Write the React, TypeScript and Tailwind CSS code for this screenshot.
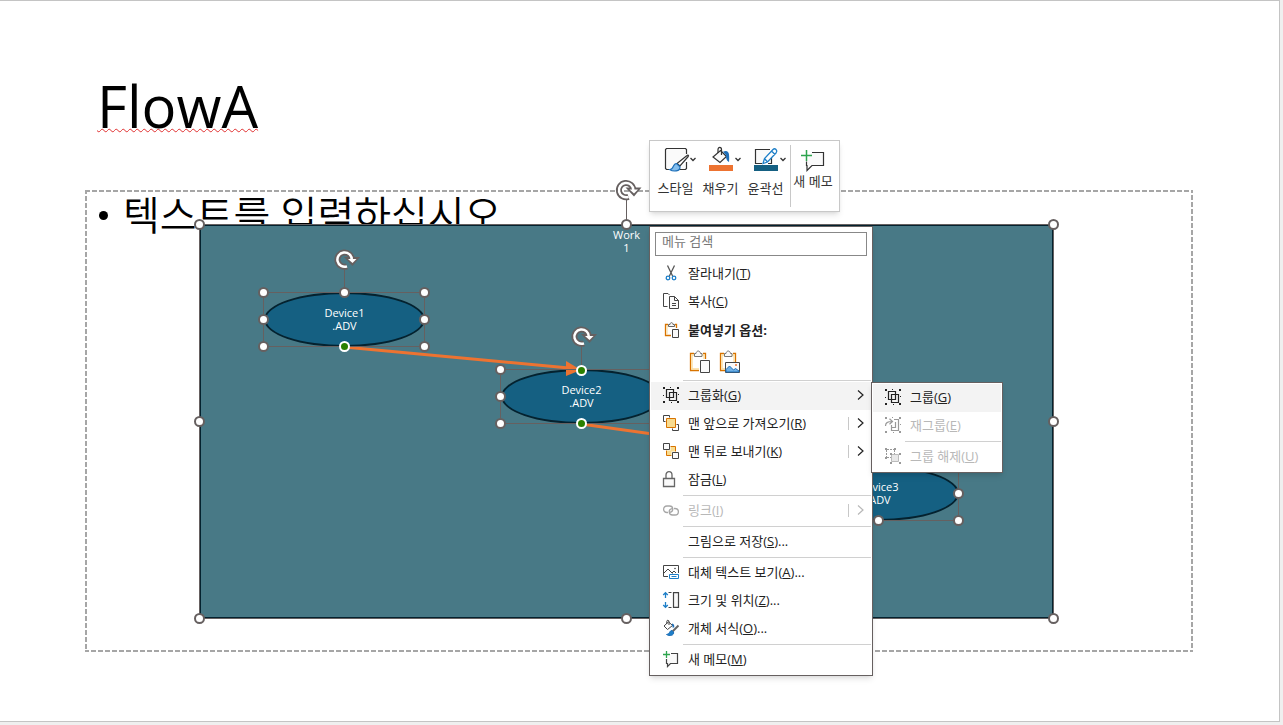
import React from 'react';

interface Point {
  x: number;
  y: number;
}

interface Device {
  name: string;
  x: number;
  y: number;
  linkedTop?: boolean;
  linkedBottom?: boolean;
}

const NODE_W = 161;
const NODE_H = 54;

// positions are relative to the top left corner of the Work shape
const devices: Device[] = [
  { name: 'Device1', x: 65, y: 68, linkedBottom: true },
  { name: 'Device2', x: 302, y: 145, linkedTop: true, linkedBottom: true },
  { name: 'Device3', x: 599, y: 242, linkedTop: true },
];

/* ===================== MENU ICONS ===================== */

const MenuIcon: React.FC<{ children?: React.ReactNode }> = ({ children }) => (
  <svg viewBox="0 0 16 16" className="h-4 w-4 shrink-0 overflow-visible" fill="none" stroke="#444" strokeWidth="1" aria-hidden="true">
    {children}
  </svg>
);

const CutIcon = () => (
  <MenuIcon>
    <path d="M4.5 .5 9.6 11M11.5 .5 6.4 11" stroke="#555" strokeWidth="1.3" />
    <circle cx="5" cy="13" r="1.8" stroke="#1e7fc8" strokeWidth="1.3" />
    <circle cx="11" cy="13" r="1.8" stroke="#1e7fc8" strokeWidth="1.3" />
  </MenuIcon>
);

const CopyIcon = () => (
  <MenuIcon>
    <path d="M4.5 13.5H.5V.5H5l1.5 1.5" />
    <path d="M6.5 3.5h5l4 4v8h-9z" fill="#fafafa" />
    <path d="M11.5 3.5v4h4M9 10.5h4M9 12.5h4" />
  </MenuIcon>
);

const PasteIcon = () => (
  <MenuIcon>
    <path d="M8 13.5H2.5v-11H5M12 2.5h1.5V6" stroke="#d87300" strokeWidth="1.3" />
    <path d="M4 12.500V4h8.500" stroke="#fbdc9a" />
    <path d="M5.500 4.500v-2H7C7 0 10 0 10 2.500h1.500v2z" stroke="#666" fill="#fafafa" />
    <path d="M9.500 7.500h6v8h-6z" fill="#fafafa" />
  </MenuIcon>
);

const Corners = () => (
  <path
    d="M0 0h2v2H0zM14 0h2v2h-2zM0 14h2v2H0zM14 14h2v2h-2zM7 0h1v1H7zM0 8h1v1H0zM15 7h1v1h-1zM8 15h1v1H8z"
    stroke="none"
    fill="currentColor"
  />
);

const GroupIcon = () => (
  <MenuIcon>
    <Corners />
    <path d="M3.500 2.500h7v8h-7zM6.500 5.500h7v8h-7z" stroke="currentColor" strokeWidth="1.2" />
  </MenuIcon>
);

const RegroupIcon = () => (
  <MenuIcon>
    <g color="#999">
      <Corners />
      <path d="M9 2.500h4.500v11h-7v-3M10.500 5v5.500H6.500V8" stroke="currentColor" strokeWidth="1.2" />
      <path d="M.5 9C.5 5.500 2.500 4.500 7 4.500M4.500 1.800 7.500 4.500 4.500 7.200" stroke="currentColor" strokeWidth="1.2" />
    </g>
  </MenuIcon>
);

const UngroupIcon = () => (
  <MenuIcon>
    <g color="#999">
      <path d="M2 1.500h7M1.500 2v7M9.500 2v4M2 9.500h4" stroke="currentColor" strokeDasharray="2 1" />
      <path d="M6.500 6.500h7v7h-7z" fill="#e8e8e8" stroke="#bbb" />
      <path
        d="M0 0h2v2H0zM9 0h2v2H9zM0 9h2v2H0zM5 5h2v2H5zM14 5h2v2h-2zM5 14h2v2H5zM14 14h2v2h-2z"
        stroke="none"
        fill="currentColor"
      />
    </g>
  </MenuIcon>
);

const FrontIcon = () => (
  <MenuIcon>
    <path d="M2.500 6.500h-2v-6h6v2M9.500 15.500h6v-6h-2M9.500 13.500v2" />
    <path d="M3.500 3.500h9v9h-9z" stroke="#d87300" fill="#f8db8f" />
  </MenuIcon>
);

const BackIcon = () => (
  <MenuIcon>
    <path d="M3.500 3.500h9v9h-9z" stroke="#d87300" fill="#f8db8f" />
    <path d="M-.5-.5h8v8h-8zM8.500 8.500h8v8h-8z" fill="#fff" stroke="none" />
    <path d="M.5.5h6v6h-6zM9.500 9.500h6v6h-6z" fill="#fafafa" />
  </MenuIcon>
);

const LockIcon = () => (
  <MenuIcon>
    <path d="M.5 7.500h11v8H.5z" fill="#fafafa" stroke="#666" strokeWidth="1.3" />
    <path d="M3 7.500V4c0-4.500 6-4.500 6 0v3.500" stroke="#666" strokeWidth="1.3" />
  </MenuIcon>
);

const LinkIcon = () => (
  <MenuIcon>
    <g stroke="#a6a6a6" strokeWidth="1.3">
      <path d="M5 10.500H4C-.5 10.500-.5 4 4 4h2.500c4 0 4.500 5.500.5 6.300" />
      <path d="M11 6.500h1c4.500 0 4.500 6.500 0 6.500H9.500c-4 0-4.500-5.500-.5-6.300" />
    </g>
  </MenuIcon>
);

const AltTextIcon = () => (
  <MenuIcon>
    <path d="M5 12.500H.5v-11h15V9" />
    <path d="m1 9 4-4 4.500 4.500M9 9l2-2 2 2" />
    <circle cx="12" cy="4.500" r=".8" fill="#444" stroke="none" />
    <path d="M6.500 10.500h9v4h-9z" fill="#fff" stroke="#1e7fc8" />
    <path d="M8.500 12.500h5" stroke="#1e7fc8" />
  </MenuIcon>
);

const SizeIcon = () => (
  <MenuIcon>
    <path d="M2.500 1v5M2.500 10v5M.2 3 2.500.7 4.800 3M.2 13l2.300 2.300L4.800 13" stroke="#1e7fc8" strokeWidth="1.300" />
    <path d="M5.500.5h3M5.500 15.500h3" />
    <path d="M10.500.7h5v14.600h-5z" strokeWidth="1.200" fill="#fafafa" />
  </MenuIcon>
);

const FormatIcon = () => (
  <MenuIcon>
    <path d="M5.500 1.800 9.500 5.500 4.500 9.500 1 6zM3.800 4V1.500c0-1.800 2.200-1.500 2.200 0V5" />
    <path d="M9 4.500c1.500 0 1.500 1.500 1.300 3" stroke="#1e6fb8" strokeWidth="1.800" />
    <path d="m15.500 5.500-6 6" stroke="#666" strokeWidth="2" />
    <path d="M9 10.500c-3 0-2 4-5.500 4 3 2 8 1 7-2.500z" fill="#1e7fc8" stroke="#1e6fb8" />
  </MenuIcon>
);

const MemoIcon = () => (
  <MenuIcon>
    <path d="M3.500 8v4.500h1v3l3-3h7v-10H8" fill="#fafafa" strokeWidth="1.200" />
    <path d="M3.500 0v7M0 3.500h7" stroke="#2da44e" strokeWidth="1.300" />
  </MenuIcon>
);

/* ===================== TOOLBAR ICONS ===================== */

const ToolIcon: React.FC<{ children: React.ReactNode }> = ({ children }) => (
  <svg viewBox="0 0 24 24" className="h-6 w-6 shrink-0 overflow-visible" fill="none" stroke="#333" strokeWidth="1.2" aria-hidden="true">
    {children}
  </svg>
);

const StyleIcon = () => (
  <ToolIcon>
    <path d="M5 22.500H2.500l-1-1v-19l1-1h19l1 1V7M22.500 15v6.500l-1 1H15" fill="#fafafa" />
    <path d="M23 8.500c1-1 2 0 1.200 1L16 19l-3-2.500z" fill="#fff" />
    <path d="M12.500 16.500c-4 0-2.500 6-6.500 6.200 3 2 10.500 2 10-3z" fill="#83bdec" stroke="#1e6fb8" />
  </ToolIcon>
);

const FillIcon = () => (
  <ToolIcon>
    <path d="M11.500 3.500 17.500 9.500 11 15.500 4 10z" fill="#fafafa" />
    <path d="M9 6V2.500C9-.3 12.500-.3 12.500 2.500V8" />
    <path d="M15 5c4-1.500 5 1 4.500 9-1.500-1-2-3-1.800-6z" fill="#1e6fb8" stroke="#1e6fb8" />
    <path d="M0 18h24v6H0z" fill="#ed7331" stroke="none" />
  </ToolIcon>
);

const OutlineIcon = () => (
  <ToolIcon>
    <path d="M8 16.500H1.500v-14H16M17.500 11v5.500H14" fill="#fafafa" />
    <path d="m9 16.500 1.500-5L19 2.500c2-2 5 1 3.200 3.200L13.500 15zM17.500 4l3.500 3.500M10.500 11.500l3 3.500" fill="#fff" stroke="#1e7fc8" strokeWidth="1.300" />
    <path d="M0 18h24v6H0z" fill="#156082" stroke="none" />
  </ToolIcon>
);

const NewMemoIcon = () => (
  <ToolIcon>
    <path d="M5.500 13.500v4H6v5l5-5h11.500v-13H11" fill="#fafafa" />
    <path d="M5.500 2v11M0 7.500h11" stroke="#2da44e" strokeWidth="1.500" />
  </ToolIcon>
);

const ChevronDown = () => (
  <svg viewBox="0 0 6 6" className="h-1.5 w-1.5 shrink-0" fill="none" stroke="#333" strokeWidth="1.3" aria-hidden="true">
    <path d="m.5 2 2.500 2.500L5.500 2" />
  </svg>
);

/* ===================== DIAGRAM ===================== */

const Handle: React.FC<Point & { linked?: boolean }> = ({ x, y, linked }) =>
  linked ? (
    <circle cx={x} cy={y} r="4.500" fill="#2a8000" stroke="#fff" strokeWidth="2" />
  ) : (
    <circle cx={x} cy={y} r="4.500" fill="#fff" stroke="#666060" strokeWidth="2" />
  );

const RotateHandle: React.FC<Point> = ({ x, y }) => (
  <g transform={`translate(${x} ${y})`}>
    <path d="M2.500 6.900A7.200 7.200 0 1 1 7.300 0" fill="none" stroke="#666060" strokeWidth="6" />
    <path d="M-.5-2.500h16L8 6.500z" fill="#666060" />
    <path d="M2.500 6.900A7.200 7.200 0 1 1 7.300 0" fill="none" stroke="#fff" strokeWidth="2.500" />
    <path d="M3.500-.5h8.500L8 3.500z" fill="#fff" />
  </g>
);

const Selection: React.FC<{ device: Device }> = ({ device }) => {
  const left = device.x - 0.5;
  const top = device.y + 0.5;
  const mid = device.x + 80.5;
  const right = left + NODE_W;
  const bottom = top + NODE_H;
  return (
    <g>
      <rect x={left} y={top} width={NODE_W} height={NODE_H} fill="none" stroke="#666060" />
      <line x1={mid} y1={top - 26} x2={mid} y2={top} stroke="#666060" />
      <Handle x={left} y={top} />
      <Handle x={right} y={top} />
      <Handle x={left} y={top + NODE_H / 2} />
      <Handle x={right} y={top + NODE_H / 2} />
      <Handle x={left} y={bottom} />
      <Handle x={right} y={bottom} />
      <Handle x={mid} y={device.linkedTop ? top + 1 : top} linked={device.linkedTop} />
      <Handle x={mid} y={bottom} linked={device.linkedBottom} />
      <RotateHandle x={mid} y={top - 33} />
    </g>
  );
};

const WorkShape = () => (
  <div className="absolute top-[34px] left-[114px] h-[395px] w-[855px] border border-[#666060] bg-[#487986] text-[11px] leading-[13px] text-white">
    <div className="h-full border border-[#04222f] pt-0.5 text-center">
      Work
      <br />1
    </div>
    {devices.map(device => (
      <div
        key={device.name}
        className="absolute flex h-[55px] w-[161px] items-center justify-center rounded-[50%] border-2 border-[#04222f] bg-[#156082] pb-0.5 text-center"
        style={{ left: device.x - 1, top: device.y - 1 }}
      >
        {device.name}
        <br />
        .ADV
      </div>
    ))}
    <svg viewBox="0 0 855 395" className="absolute -top-px -left-px h-[395px] w-[855px] overflow-visible" aria-hidden="true">
      <g stroke="#ed7331" strokeWidth="3">
        <path d="M145 123 370 144" />
        <path d="M382 200 668 240" />
      </g>
      <path d="M367 137v15l15-6z" fill="#ed7331" />
      {devices.map(device => (
        <Selection key={device.name} device={device} />
      ))}
      <line x1="427.500" y1="-26" x2="427.500" y2="0" stroke="#666060" />
      {[0.5, 427.5, 854.5].map(x =>
        [0.5, 197.5, 394.5].map(y => (x === 427.5 && y === 197.5 ? null : <Handle key={`${x}-${y}`} x={x} y={y} />))
      )}
      <RotateHandle x={427} y={-34} />
    </svg>
  </div>
);

/* ===================== TOOLBAR + MENUS ===================== */

const ToolButton: React.FC<{ label: string; icon: React.ReactNode }> = ({ label, icon }) => (
  <button className="flex w-[45px] flex-col items-center gap-[5px]">
    <span className="flex items-center gap-0.5 pl-2">
      {icon}
      <ChevronDown />
    </span>
    <span className="whitespace-nowrap">{label}</span>
  </button>
);

const MiniToolbar = () => (
  <div
    role="toolbar"
    className="absolute top-[139px] left-[649px] flex h-[72px] w-[191px] border border-[#c8c8c8] bg-white py-1 pr-1 pl-[3px] text-[13px] leading-6 text-[#333] shadow-md"
  >
    <div className="flex pt-0.5">
      <ToolButton label="스타일" icon={<StyleIcon />} />
      <ToolButton label="채우기" icon={<FillIcon />} />
      <ToolButton label="윤곽선" icon={<OutlineIcon />} />
    </div>
    <button className="ml-0.5 flex flex-1 flex-col items-center border-l border-[#c8c8c8] pt-[3px] leading-[18px]">
      <NewMemoIcon />
      <span className="whitespace-nowrap">새 메모</span>
    </button>
  </div>
);

interface ItemProps {
  label: string;
  hotkey: string;
  suffix?: string;
  icon?: React.ReactNode;
  arrow?: boolean;
  split?: boolean;
  active?: boolean;
  disabled?: boolean;
}

const MenuItem: React.FC<ItemProps> = ({ label, hotkey, suffix, icon, arrow, split, active, disabled }) => (
  <button
    role="menuitem"
    disabled={disabled}
    className={`flex h-7 w-full items-center pr-[7px] pb-0.5 pl-3 text-left ${active ? 'bg-[#f3f3f3]' : ''} ${
      disabled ? 'text-[#b8b8b8]' : 'text-[#222]'
    }`}
  >
    {icon || <span className="w-4" />}
    <span className="ml-[9px] flex-1 whitespace-nowrap">
      {label}(<u className="underline-offset-1">{hotkey}</u>){suffix}
    </span>
    {split && <span className="mr-2 h-[13px] w-px bg-[#c8c8c8]" />}
    {arrow && (
      <svg viewBox="0 0 7 12" className="h-3 w-[7px]" fill="none" stroke="currentColor" strokeWidth="1.2" aria-hidden="true">
        <path d="m1 1.500 5 4.500-5 4.500" />
      </svg>
    )}
  </button>
);

const Divider = () => <hr className="mt-px mb-px ml-8 border-t border-[#d0d0d0]" />;

const ContextMenu = () => (
  <div
    role="menu"
    className="absolute top-[225px] left-[649px] w-[224px] border border-[#666060] bg-white px-px pt-[5px] pb-px text-[13px] leading-5 shadow-md"
  >
    <input
      type="text"
      aria-label="메뉴 검색"
      placeholder="메뉴 검색"
      className="mx-1 mb-1 block h-6 w-[212px] border border-[#888] px-1.5 pb-1.5 placeholder:text-[#777]"
    />
    <MenuItem label="잘라내기" hotkey="T" icon={<CutIcon />} />
    <MenuItem label="복사" hotkey="C" icon={<CopyIcon />} />
    <div className="flex h-7 items-center pl-3 font-bold text-[#222]">
      <PasteIcon />
      <span className="ml-[9px]">붙여넣기 옵션:</span>
    </div>
    <div className="flex h-[35px] items-center gap-1.5 pl-[38px]">
      <button aria-label="대상 테마 사용">
        <svg viewBox="0 0 24 24" className="h-6 w-6" fill="none" stroke="#444" aria-hidden="true">
          <path d="M10 20.500H1.500v-17H5M14 3.500h2.500V9" stroke="#d87300" strokeWidth="1.300" />
          <path d="M3 19v-14h12V9M3 19h7" stroke="#fbdc9a" strokeWidth="1.300" />
          <path d="M5.500 6.500v-3H7c.5-3.300 4-3.300 4.500 0H13v3z" fill="#fafafa" stroke="#777" />
          <path d="M11.500 10.500h9v12h-9z" fill="#fafafa" />
        </svg>
      </button>
      <button aria-label="그림">
        <svg viewBox="0 0 24 24" className="h-6 w-6" fill="none" stroke="#444" aria-hidden="true">
          <path d="M6 20.500H1.500v-17H5M14 3.500h2.500V12" stroke="#d87300" strokeWidth="1.300" />
          <path d="M3 19v-14h12v7M3 19h3" stroke="#fbdc9a" strokeWidth="1.300" />
          <path d="M5.500 6.500v-3H7c.5-3.300 4-3.300 4.500 0H13v3z" fill="#fafafa" stroke="#777" />
          <path d="M6.500 12.500h14v10h-14z" fill="#fafafa" />
          <path d="M7 19.500 10.500 16l4 4 2-1.500 3.500 2.500v1H7z" fill="#6fb1e6" stroke="#1e6fb8" />
          <circle cx="17" cy="15" r="1" fill="#ed7331" stroke="none" />
        </svg>
      </button>
    </div>
    <Divider />
    <MenuItem label="그룹화" hotkey="G" icon={<GroupIcon />} arrow active />
    <MenuItem label="맨 앞으로 가져오기" hotkey="R" icon={<FrontIcon />} arrow split />
    <MenuItem label="맨 뒤로 보내기" hotkey="K" icon={<BackIcon />} arrow split />
    <MenuItem label="잠금" hotkey="L" icon={<LockIcon />} />
    <Divider />
    <MenuItem label="링크" hotkey="I" icon={<LinkIcon />} arrow split disabled />
    <Divider />
    <MenuItem label="그림으로 저장" hotkey="S" suffix="..." />
    <Divider />
    <MenuItem label="대체 텍스트 보기" hotkey="A" suffix="..." icon={<AltTextIcon />} />
    <MenuItem label="크기 및 위치" hotkey="Z" suffix="..." icon={<SizeIcon />} />
    <MenuItem label="개체 서식" hotkey="O" suffix="..." icon={<FormatIcon />} />
    <Divider />
    <MenuItem label="새 메모" hotkey="M" icon={<MemoIcon />} />

    {/* submenu of 그룹화 */}
    <div role="menu" className="absolute top-[155px] left-[221px] w-[132px] border border-[#666060] bg-white p-px shadow-md">
      <MenuItem label="그룹" hotkey="G" icon={<GroupIcon />} active />
      <MenuItem label="재그룹" hotkey="E" icon={<RegroupIcon />} disabled />
      <Divider />
      <MenuItem label="그룹 해제" hotkey="U" icon={<UngroupIcon />} disabled />
    </div>
  </div>
);

/* ===================== SLIDE ===================== */

const App: React.FC = () => {
  return (
    <div className="flex min-h-screen flex-col bg-[#efefef] pr-[3px] pb-[3px] font-['Open_Sans','Noto_Sans_CJK_KR',sans-serif]">
      <main className="relative flex-1 border-t border-r border-b border-[#c4c4c4] bg-white pr-[86px] pb-[69px] pl-[85px] text-black">
        <h1 className="px-3 pt-[65px] pb-11 text-[58px] leading-[80px] font-normal">
          <span className="underline decoration-[#e03030] decoration-wavy decoration-1 underline-offset-0 [text-decoration-skip-ink:none]">
            FlowA
          </span>
        </h1>

        <section className="relative h-[462px]">
          <svg className="absolute inset-0 h-full w-full" aria-hidden="true">
            <rect width="100%" height="100%" fill="none" stroke="#a6a6a6" strokeWidth="4" strokeDasharray="5 2" />
          </svg>
          <ul className="pt-px pl-3.5 text-[40px] leading-[48px] font-[350]">
            <li className="flex items-center gap-[15px]">
              <span className="h-[9px] w-[9px] rounded-full bg-black" />
              텍스트를 입력하십시오
            </li>
          </ul>
          <WorkShape />
        </section>

        <MiniToolbar />
        <ContextMenu />
      </main>
    </div>
  );
};

export default App;
